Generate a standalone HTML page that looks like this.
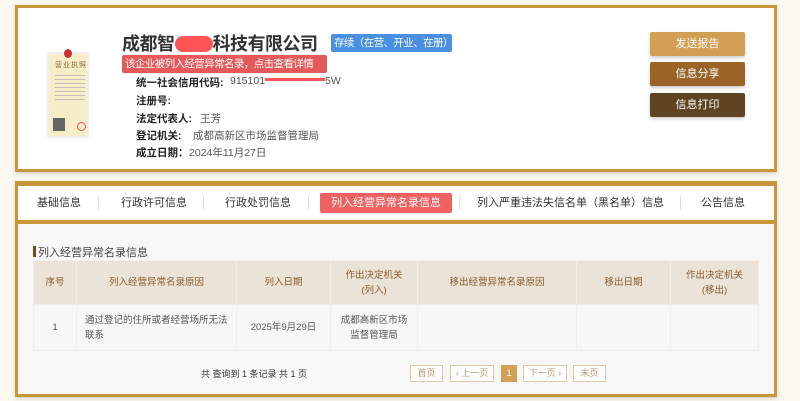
<!DOCTYPE html>
<html><head><meta charset="utf-8"><style>
*{margin:0;padding:0;box-sizing:border-box}
body{width:800px;height:401px;background:#fbf8f0;font-family:"Liberation Sans","Noto Sans CJK SC",sans-serif;position:relative;overflow:hidden;color:#333}
.card1{position:absolute;left:15px;top:5px;width:762px;height:167px;background:#fff;border:3px solid #c9973a;box-shadow:0 2px 4px rgba(0,0,0,.15)}
.abs{position:absolute;white-space:nowrap}
.title{left:104px;top:22px;font-size:18px;font-weight:bold;color:#333;letter-spacing:-0.5px}
.badge{left:313px;top:26px;width:121px;height:18px;background:#4a90e2;color:#fff;font-size:10.5px;line-height:18px;padding-left:3px;border-radius:2px;letter-spacing:-0.6px;overflow:hidden}
.warn{left:104px;top:47px;width:205px;height:18px;background:#e45a5a;color:#fff;font-size:10.5px;line-height:18px;padding-left:3px;border-radius:2px;letter-spacing:-0.6px;overflow:hidden}
.lbl{font-size:10.5px;font-weight:bold;color:#222}
.val{font-size:10.5px;color:#555}
.btn{position:absolute;left:632px;width:95px;height:24px;color:#fff;font-size:11px;text-align:center;line-height:24px;border-radius:2px;box-shadow:0 2px 3px rgba(0,0,0,.2)}
.card2{position:absolute;left:15px;top:181px;width:762px;height:216px;background:#f8f8f8;border:3px solid #c9973a;border-top-width:5px;box-shadow:0 2px 4px rgba(0,0,0,.15)}
.tabs{position:absolute;left:0;top:0;width:756px;height:38px;background:#fff;border-bottom:4px solid #c9973a}
.tab{position:absolute;top:7px;height:20px;line-height:20px;font-size:11px;color:#333;white-space:nowrap}
.sep{position:absolute;top:10px;width:1px;height:14px;background:#ddd}
table{position:absolute;left:15px;top:74px;width:726px;border-collapse:collapse;font-size:9.5px}
th{background:#ebe3d7;color:#8a5a2a;font-weight:normal;height:44px;border:1px solid #f2eee8;line-height:15px}
td{background:#f7f7f7;color:#555;height:46px;border:1px solid #eee;text-align:center;line-height:15px}
.pg{position:absolute;top:179px;height:17px;border:1px solid #e0c9a6;color:#b89a70;font-size:9px;line-height:15px;text-align:center;background:#fff}
</style></head><body>
<div class="card1">
 <div class="abs" style="left:29px;top:44px;width:42px;height:86px;background:#f7eec8;border:2px solid #eee"></div>
 <div class="abs" style="left:46px;top:41px;width:8px;height:9px;background:#c33;border-radius:50%"></div>
 <div class="abs" style="left:37px;top:52px;font-size:7px;color:#8a6a3a;letter-spacing:1px">营业执照</div>
 <div class="abs" style="left:37px;top:64px;width:30px;height:30px;background:repeating-linear-gradient(#f7eec8 0 3px,#cbb 3px 4px)"></div>
 <div class="abs" style="left:35px;top:110px;width:12px;height:13px;background:#666"></div>
 <div class="abs" style="left:59px;top:114px;width:9px;height:9px;border:1px solid #e55;border-radius:50%"></div>
 <div class="abs title">成都智<span style="display:inline-block;width:38px;height:16px;background:#f55;border-radius:8px;vertical-align:-2px"></span>科技有限公司</div>
 <div class="abs badge">存续（在营、开业、在册）</div>
 <div class="abs warn">该企业被列入经营异常名录，点击查看详情</div>
 <div class="abs lbl" style="left:118px;top:67px">统一社会信用代码:</div><div class="abs val" style="left:212px;top:67px">915101<span style="display:inline-block;width:60px;height:3px;background:#f55;vertical-align:3px"></span>5W</div>
 <div class="abs lbl" style="left:118px;top:85px">注册号:</div>
 <div class="abs lbl" style="left:118px;top:103px">法定代表人:</div><div class="abs val" style="left:182px;top:103px">王芳</div>
 <div class="abs lbl" style="left:118px;top:120px">登记机关:</div><div class="abs val" style="left:175px;top:120px">成都高新区市场监督管理局</div>
 <div class="abs lbl" style="left:118px;top:137px">成立日期：</div><div class="abs val" style="left:171px;top:137px">2024年11月27日</div>
 <div class="btn" style="top:24px;background:#d2a055">发送报告</div>
 <div class="btn" style="top:54px;background:#9a6428">信息分享</div>
 <div class="btn" style="top:85px;background:#5e4420">信息打印</div>
</div>
<div class="card2">
 <div class="tabs">
  <div class="tab" style="left:19px">基础信息</div><div class="sep" style="left:80px"></div>
  <div class="tab" style="left:103px">行政许可信息</div><div class="sep" style="left:185px"></div>
  <div class="tab" style="left:207px">行政处罚信息</div><div class="sep" style="left:290px"></div>
  <div class="tab" style="left:302px;width:132px;background:#f06262;color:#fff;text-align:center;border-radius:2px">列入经营异常名录信息</div><div class="sep" style="left:441px"></div>
  <div class="tab" style="left:459px">列入严重违法失信名单（黑名单）信息</div><div class="sep" style="left:662px"></div>
  <div class="tab" style="left:683px">公告信息</div>
 </div>
 <div class="abs" style="left:15px;top:60px;width:3px;height:11px;background:#7a4a1a"></div>
 <div class="abs" style="left:20px;top:58px;font-size:11px;color:#444">列入经营异常名录信息</div>
 <table>
  <tr><th style="width:43px">序号</th><th style="width:160px">列入经营异常名录原因</th><th style="width:94px">列入日期</th><th style="width:87px">作出决定机关<br>(列入)</th><th style="width:159px">移出经营异常名录原因</th><th style="width:94px">移出日期</th><th>作出决定机关<br>(移出)</th></tr>
  <tr><td>1</td><td style="text-align:left;padding-left:8px">通过登记的住所或者经营场所无法<br>联系</td><td>2025年9月29日</td><td>成都高新区市场<br>监督管理局</td><td></td><td></td><td></td></tr>
 </table>
 <div class="abs" style="left:183px;top:181px;font-size:9px;color:#333">共 查询到 1 条记录 共 1 页</div>
 <div class="pg" style="left:392px;width:33px">首页</div>
 <div class="pg" style="left:432px;width:44px">‹ 上一页</div>
 <div class="pg" style="left:483px;width:16px;background:#d2a055;color:#fff;border-color:#d2a055">1</div>
 <div class="pg" style="left:505px;width:44px">下一页 ›</div>
 <div class="pg" style="left:555px;width:33px">末页</div>
</div>
</body></html>
